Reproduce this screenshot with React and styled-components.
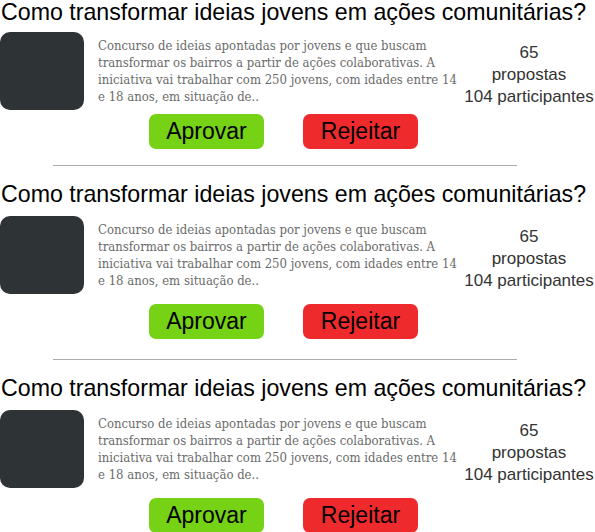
import React from 'react';
import styled, { createGlobalStyle } from 'styled-components';

const GlobalStyle = createGlobalStyle`
  html, body {
    margin: 0;
    padding: 0;
    background: #ffffff;
  }
  body {
    font-family: "Liberation Sans", Arial, sans-serif;
  }
`;

const List = styled.div`
  width: 595px;
`;

const Card = styled.section`
  display: flex;
  flex-direction: column;
`;

const Title = styled.h2`
  margin: 0 0 0 1px;
  font-size: 23.2px;
  line-height: 25px;
  font-weight: normal;
  color: #000;
  white-space: nowrap;
`;

const Row = styled.div`
  display: flex;
  align-items: flex-start;
  margin-top: ${p => (p.$first ? '7px' : '9px')};
  height: 78px;
`;

const Thumb = styled.div`
  flex: 0 0 84px;
  height: 78px;
  background: #2e3336;
  border-radius: 10px;
`;

const Description = styled.p`
  flex: 1;
  margin: 5px 5px 0 14px;
  font-family: "DejaVu Serif", "Liberation Serif", serif;
  font-stretch: condensed;
  font-size: 13px;
  line-height: 17px;
  color: #6b6b6b;
`;

const Stats = styled.div`
  flex: 0 0 132px;
  padding-top: 10px;
  text-align: center;
  font-size: 17px;
  line-height: 22px;
  color: #333333;
  white-space: nowrap;
`;

const Actions = styled.div`
  display: flex;
  gap: 39px;
  padding-left: 149px;
  margin-top: ${p => (p.$first ? '4px' : '10px')};
`;

const Button = styled.button`
  width: 115px;
  height: 35px;
  border: none;
  border-radius: 7px;
  padding: 0;
  background: ${p => (p.$variant === 'reject' ? '#ef2a2d' : '#75d215')};
  color: #000;
  font-family: "Liberation Sans", Arial, sans-serif;
  font-size: 23px;
  cursor: pointer;
`;

const Divider = styled.hr`
  width: 464px;
  margin: ${p => (p.$first ? '16px' : '20px')} 0 16px 53px;
  border: none;
  border-top: 1px solid #acacac;
  height: 0;
`;

const cards = [1, 2, 3].map(id => ({
  id,
  title: 'Como transformar ideias jovens em ações comunitárias?',
  text: 'Concurso de ideias apontadas por jovens e que buscam transformar os bairros a partir de ações colaborativas. A iniciativa vai trabalhar com 250 jovens, com idades entre 14 e 18 anos, em situação de..',
  proposals: 65,
  participants: 104,
}));

const App = () => {
  return (
    <>
      <GlobalStyle />
      <List>
        {cards.map((c, i) => (
          <Card key={c.id}>
            <Title>{c.title}</Title>
            <Row $first={i === 0}>
              <Thumb />
              <Description>{c.text}</Description>
              <Stats>
                {c.proposals}
                <br />
                propostas
                <br />
                {c.participants} participantes
              </Stats>
            </Row>
            <Actions $first={i === 0}>
              <Button>Aprovar</Button>
              <Button $variant="reject">Rejeitar</Button>
            </Actions>
            {i < cards.length - 1 && <Divider $first={i === 0} />}
          </Card>
        ))}
      </List>
    </>
  );
};

export default App;
